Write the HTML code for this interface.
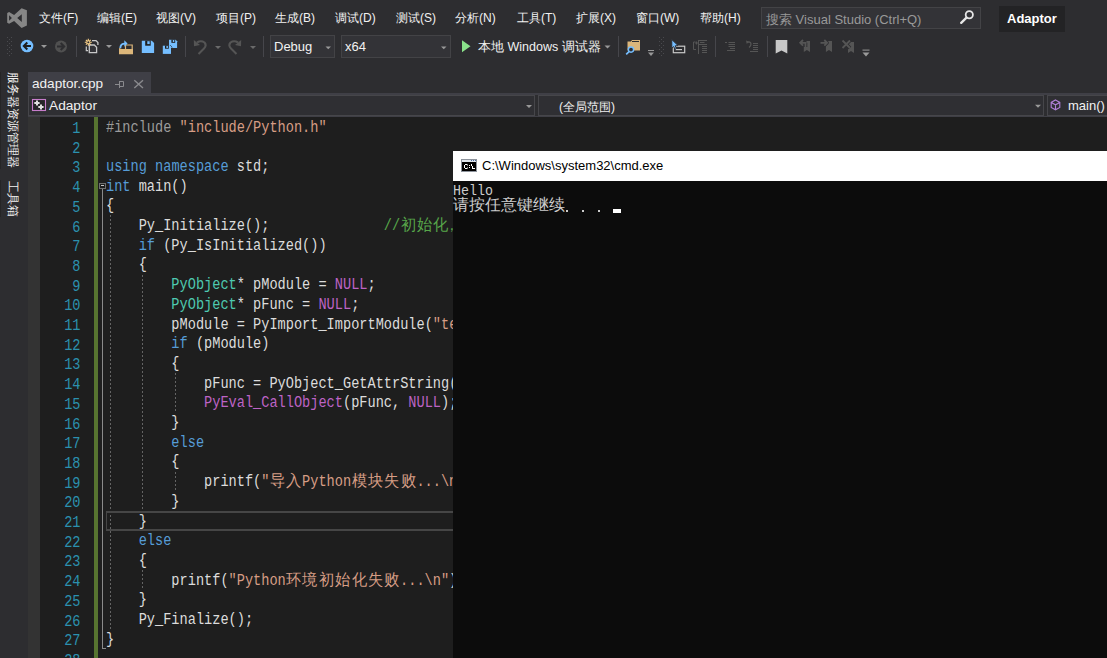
<!DOCTYPE html>
<html><head><meta charset="utf-8">
<style>
*{margin:0;padding:0;box-sizing:border-box}
html,body{width:1107px;height:658px;overflow:hidden;background:#2d2d30;font-family:"Liberation Sans",sans-serif;color:#f1f1f1}
.a{position:absolute}
.menu{font-size:12px;top:10px;color:#f1f1f1;white-space:nowrap}
.sep{position:absolute;width:1px;background:#3f3f46;top:36px;height:21px}
.dd{position:absolute;width:0;height:0;border-left:3px solid transparent;border-right:3px solid transparent;border-top:3px solid #999}
.ui{font-size:13px;white-space:nowrap}
/* editor */
#ed{position:absolute;left:28px;top:117px;width:1079px;height:541px;background:#1e1e1e;overflow:hidden}
.ln{position:absolute;left:0;width:52.5px;line-height:19.71px;text-align:right;font-family:"Liberation Mono",monospace;font-size:16px;color:#2b91af;transform:scaleX(0.851);transform-origin:right top}
.code{position:absolute;left:78.3px;line-height:19.71px;white-space:pre;font-family:"Liberation Mono",monospace;font-size:16px;color:#dcdcdc;transform:scaleX(0.851);transform-origin:left top}
.w{display:inline-block;width:19.2px;text-align:center;transform:scaleX(1.12)}
.g{position:absolute;width:1px;background:repeating-linear-gradient(to bottom,#646464 0 2px,transparent 2px 4px)}
.k{color:#569cd6}.s{color:#d69d85}.p{color:#9b9b9b}.t{color:#4ec9b0}.m{color:#bd63c5}.c{color:#57a64a}
</style></head><body>
<!-- menu bar -->
<svg class="a" style="left:0;top:0" width="32" height="32" viewBox="0 0 32 32"><path d="M7.2 12.9 L9.1 12 L14.1 14.9 L21.6 8.2 L26.9 10.3 V25.5 L21.6 27.9 L14.1 21 L9.1 23.8 L7.2 22.8 Z M9.1 15.3 V20.8 L11.9 18 Z M21.8 14.3 V22 L17.2 18 Z" fill="#868686" fill-rule="evenodd"/></svg>
<div class="a menu" style="left:39px">文件(F)</div>
<div class="a menu" style="left:97px">编辑(E)</div>
<div class="a menu" style="left:156px">视图(V)</div>
<div class="a menu" style="left:216px">项目(P)</div>
<div class="a menu" style="left:275px">生成(B)</div>
<div class="a menu" style="left:335px">调试(D)</div>
<div class="a menu" style="left:396px">测试(S)</div>
<div class="a menu" style="left:455px">分析(N)</div>
<div class="a menu" style="left:517px">工具(T)</div>
<div class="a menu" style="left:576px">扩展(X)</div>
<div class="a menu" style="left:636px">窗口(W)</div>
<div class="a menu" style="left:700px">帮助(H)</div>
<div class="a" style="left:761px;top:7px;width:220px;height:22px;background:#333337;border:1px solid #434346"></div>
<div class="a menu" style="left:766px;top:11px;color:#999999;font-size:13px">搜索 Visual Studio (Ctrl+Q)</div>
<div class="a" style="left:999px;top:6px;width:66px;height:26px;background:#232325"></div>
<div class="a ui" style="left:1007px;top:11px;font-weight:bold;color:#ffffff">Adaptor</div>

<svg class="a" style="left:0;top:0" width="1107" height="120" viewBox="0 0 1107 120">
<!-- combos toolbar -->
<rect x="270.5" y="35.5" width="64" height="22" fill="#333337" stroke="#434346"/>
<rect x="341.5" y="35.5" width="109" height="22" fill="#333337" stroke="#434346"/>
<g fill="#4a4a4e">
<rect x="7" y="37" width="1" height="1"/><rect x="7" y="41" width="1" height="1"/><rect x="7" y="45" width="1" height="1"/><rect x="7" y="49" width="1" height="1"/><rect x="7" y="53" width="1" height="1"/>
<rect x="11" y="37" width="1" height="1"/><rect x="11" y="41" width="1" height="1"/><rect x="11" y="45" width="1" height="1"/><rect x="11" y="49" width="1" height="1"/><rect x="11" y="53" width="1" height="1"/>
<rect x="9" y="39" width="1" height="1"/><rect x="9" y="43" width="1" height="1"/><rect x="9" y="47" width="1" height="1"/><rect x="9" y="51" width="1" height="1"/><rect x="9" y="55" width="1" height="1"/>
<rect x="659" y="37" width="1" height="1"/><rect x="659" y="41" width="1" height="1"/><rect x="659" y="45" width="1" height="1"/><rect x="659" y="49" width="1" height="1"/><rect x="659" y="53" width="1" height="1"/>
<rect x="663" y="37" width="1" height="1"/><rect x="663" y="41" width="1" height="1"/><rect x="663" y="45" width="1" height="1"/><rect x="663" y="49" width="1" height="1"/><rect x="663" y="53" width="1" height="1"/>
<rect x="661" y="39" width="1" height="1"/><rect x="661" y="43" width="1" height="1"/><rect x="661" y="47" width="1" height="1"/><rect x="661" y="51" width="1" height="1"/><rect x="661" y="55" width="1" height="1"/>
</g>
<g fill="#46464b">
<rect x="76" y="36" width="1" height="21"/><rect x="185" y="36" width="1" height="21"/><rect x="263" y="36" width="1" height="21"/>
<rect x="618" y="36" width="1" height="21"/><rect x="715" y="36" width="1" height="21"/><rect x="767" y="36" width="1" height="21"/>
</g>
<!-- back / forward -->
<circle cx="27" cy="46" r="6.3" fill="#75beff"/>
<path d="M24.5 46 H31 M27.3 42.5 L23.8 46 L27.3 49.5" stroke="#1e1e1e" stroke-width="2" fill="none"/>
<circle cx="61" cy="46.5" r="6" fill="#505050"/>
<path d="M57 46.5 H63.5 M60.7 43 L64.2 46.5 L60.7 50" stroke="#2d2d30" stroke-width="2" fill="none"/>
<!-- dropdown arrows -->
<g fill="#999999">
<path d="M41 45 H47 L44 48 Z"/><path d="M106 45 H112 L109 48 Z"/>
<path d="M325.5 46.5 H331 L328.25 49.2 Z"/><path d="M441 46.5 H446.5 L443.75 49.2 Z"/>
<path d="M604.5 45.5 H610.5 L607.5 48.5 Z"/>
</g>
<g fill="#6a6a6a"><path d="M215 46 H221 L218 49 Z"/><path d="M250 46 H256 L253 49 Z"/></g>
<!-- new project -->
<path d="M92 40.6 H96 L97.9 42.6 V45" stroke="#c8c8c8" stroke-width="1.3" fill="none"/>
<path d="M89.3 45 H94.3 L96.6 47.3 V52.6 H89.3 Z" fill="#333337" stroke="#c8c8c8" stroke-width="1.3"/>
<path d="M86.3 46.5 V50.6 H88" stroke="#c8c8c8" stroke-width="1.2" fill="none"/>
<g stroke="#ffd58a" stroke-width="1.1"><path d="M88.3 38.8 V45.8 M84.8 42.3 H91.8 M85.9 39.9 L90.7 44.7 M90.7 39.9 L85.9 44.7"/></g>
<circle cx="88.3" cy="42.3" r="1.4" fill="#2d2d30" stroke="#ffd58a" stroke-width="0.8"/>
<!-- open -->
<path d="M125.5 45 H132.2 V49.5 H125.5 Z" fill="none" stroke="#dcb67a" stroke-width="1.2"/>
<path d="M119 48 V54.3 H133 L133 49 H122 Z" fill="#dcb67a"/>
<path d="M120.3 48 Q120.5 43.6 125 43.6" stroke="#75beff" stroke-width="1.9" fill="none"/>
<path d="M124.3 40.2 L127.6 43.5 L124.3 46.8 Z" fill="#75beff"/>
<!-- save -->
<path d="M141.8 40.8 H151.8 L154.1 43.1 V53.1 H141.8 Z" fill="#75beff"/>
<rect x="145.2" y="40.6" width="5.5" height="5.1" fill="#1e1e1e"/>
<rect x="147.3" y="41.2" width="2.4" height="2.9" fill="#75beff"/>
<!-- save all -->
<path d="M169 39.8 H175.6 L177.1 41.3 V47.9 H169 Z" fill="#75beff"/>
<rect x="171.4" y="39.6" width="3.8" height="3.2" fill="#1e1e1e"/>
<rect x="172.8" y="40" width="1.5" height="2" fill="#75beff"/>
<path d="M170 45 L172 47.5" stroke="#1e1e1e" stroke-width="0.9"/>
<path d="M162.8 45.7 H171 V53.9 H162.8 Z" fill="#75beff"/>
<rect x="165" y="45.5" width="3.8" height="3.2" fill="#1e1e1e"/>
<rect x="166.4" y="46" width="1.5" height="2" fill="#75beff"/>
<!-- undo / redo -->
<g stroke="#555555" stroke-width="2.1" fill="none">
<path d="M197 42.5 Q201 40 204.5 42.5 Q207 45.5 204 48.5 L198.5 54"/>
<path d="M238 42.5 Q234 40 230.5 42.5 Q228 45.5 231 48.5 L236.5 54"/>
</g>
<path d="M193.8 40 L194 46.3 L200 45 Z" fill="#555555"/>
<path d="M241.2 40 L241 46.3 L235 45 Z" fill="#555555"/>
<!-- play -->
<path d="M462 40.2 L470.5 46.2 L462 52.2 Z" fill="#8ae28a"/>
<!-- find in files -->
<path d="M627.5 41.5 H631 L632 40 H640 V50.5 H627.5 Z" fill="#dcb67a"/>
<rect x="632" y="41" width="7" height="1" fill="#2d2d30"/>
<circle cx="631" cy="49.6" r="2.6" fill="#2d2d30" stroke="#75beff" stroke-width="1.4"/>
<path d="M629 51.6 L626.2 54.4" stroke="#75beff" stroke-width="1.6"/>
<!-- overflow -->
<g fill="#999999"><rect x="648" y="50" width="6" height="1"/><path d="M648 52.5 H654 L651 56 Z"/>
<rect x="862.5" y="49.6" width="7" height="1"/><path d="M862.5 52.5 H869.5 L866 56.4 Z"/></g>
<!-- select -->
<rect x="673.3" y="46.2" width="11.4" height="6.5" fill="none" stroke="#c8c8c8" stroke-width="1.2"/>
<rect x="675.5" y="49" width="6.5" height="1.2" fill="#c8c8c8"/>
<path d="M671.8 39.6 L678 45.6 L675.2 45.8 L676.4 48.6 L674.9 49.3 L673.7 46.5 L671.8 48.2 Z" fill="#75beff" stroke="#2d2d30" stroke-width="0.9"/>
<!-- grayed icons -->
<g stroke="#555555" stroke-width="1" fill="none">
<path d="M695.5 42 H693.5 V49.5 H696 M696.5 41.5 V44.5 M695 43 H698"/>
<path d="M698.5 40 V54 M699 40.5 H707 M700 42.5 H704.5 M699 44.5 H707 M702 46.5 H707 M702 48.5 H707 M702 50.5 H707 M702 52.5 H707"/>
<path d="M725 42.5 H727 M728.5 42.5 H735 M728.5 44.5 H735 M728.5 46.5 H735 M730 48.5 H735 M727 50.5 H735"/>
<path d="M753 43.5 H758 M753 45.5 H758 M753 47.5 H758 M753 49.5 H758 M750 51.5 H758"/>
<path d="M747 42.5 Q750.5 41 751 44 Q751 46 749 47.5" stroke-width="1.3"/>
</g>
<path d="M746 40.5 L748.8 41.5 L746.8 44 Z" fill="#555"/>
<!-- bookmarks -->
<path d="M775.7 40 H787.3 V53.5 L781.5 50.5 L775.7 53.5 Z" fill="#c8c8c8"/>
<path d="M803.8 41 H810 V52 L806.9 50 L803.8 52 Z" fill="#555555"/>
<path d="M825.9 41 H832 V52 L828.95 50 L825.9 52 Z" fill="#555555"/>
<path d="M848 42 H854 V53 L851 51 L848 53 Z" fill="#555555"/>
<g stroke="#2d2d30" stroke-width="3.6" fill="none" stroke-linejoin="round">
<path d="M800.5 42.8 H806.5 M803 40 L800.2 42.8 L803 45.6 M805.5 42.8 V47"/>
<path d="M820.5 42.8 H827 M824.3 40 L827.1 42.8 L824.3 45.6"/>
<path d="M842.5 40.5 L850 48 M850 40.5 L842.5 48"/>
</g>
<g stroke="#555555" stroke-width="1.8" fill="none">
<path d="M800.5 42.8 H806.5 M803 40 L800.2 42.8 L803 45.6 M805.5 42.8 V47"/>
<path d="M820.5 42.8 H827 M824.3 40 L827.1 42.8 L824.3 45.6"/>
<path d="M842.5 40.5 L850 48 M850 40.5 L842.5 48"/>
</g>
<!-- search icon -->
<circle cx="969.3" cy="14.8" r="3.6" fill="none" stroke="#e6e6e6" stroke-width="1.8"/>
<path d="M966.5 17.6 L961.2 22.9" stroke="#e6e6e6" stroke-width="2.3" stroke-linecap="round"/>
</svg>
<div class="a ui" style="left:274px;top:39px">Debug</div>
<div class="a ui" style="left:345px;top:39px">x64</div>
<div class="a ui" style="left:478px;top:39px;font-size:12.5px">本地 Windows 调试器</div>
<!-- tab strip -->
<div class="a" style="left:28px;top:72px;width:123px;height:21px;background:#3f3f46"></div>
<div class="a ui" style="left:32px;top:76px;color:#f1f1f1;font-size:13.6px">adaptor.cpp</div>
<svg class="a" style="left:110px;top:76px" width="40" height="16" viewBox="0 0 40 16">
<path d="M5 8.5 H9 M9.5 5 V12 M9.5 5.5 H13.5 V10.5 H9.5" stroke="#8a8a8e" stroke-width="1" fill="none"/>
<path d="M24.3 4.2 L33 12 M33 4.2 L24.3 12" stroke="#8a8a8e" stroke-width="1.4"/>
</svg>

<!-- nav bar -->
<div class="a" style="left:28px;top:93px;width:1079px;height:24px;background:#3f3f46"></div>
<div class="a" style="left:28px;top:95px;width:507px;height:21px;background:#2f2f33;border:1px solid #46464a"></div>
<div class="a" style="left:535px;top:95px;width:3px;height:21px;background:#2d2d30"></div>
<div class="a" style="left:538px;top:95px;width:506px;height:21px;background:#2f2f33;border:1px solid #46464a"></div>
<div class="a" style="left:1044px;top:95px;width:3px;height:21px;background:#2d2d30"></div>
<div class="a" style="left:1047px;top:95px;width:70px;height:21px;background:#2f2f33;border:1px solid #46464a"></div>
<svg class="a" style="left:0;top:90px" width="1107" height="30" viewBox="0 90 1107 30">
<rect x="32.5" y="99.5" width="13" height="11" fill="#252528" stroke="#c77dcb" stroke-width="1.1"/>
<path d="M36 100.5 H38 V102 H39.6 V104 H38 V105.5 H36 V104 H34.3 V102 H36 Z M40 104.5 H42 V106 H43.6 V108 H42 V109.6 H40 V108 H38.3 V106 H40 Z" fill="#e0e0e0"/>
<path d="M526 105 H532 L529 108 Z M1035 104.7 H1041 L1038 107.8 Z" fill="#999999"/>
<g stroke="#b180d7" stroke-width="1.1" fill="none">
<path d="M1055.5 100 L1059.8 102.4 V107.4 L1055.5 109.8 L1051.2 107.4 V102.4 Z M1051.2 102.4 L1055.5 104.8 L1059.8 102.4 M1055.5 104.8 V109.8"/>
</g>
</svg>
<div class="a ui" style="left:49px;top:98px;font-size:13.7px">Adaptor</div>
<div class="a ui" style="left:559px;top:99px;font-size:12px">(全局范围)</div>
<div class="a ui" style="left:1068px;top:98px;font-size:13px">main()</div>

<!-- left strip -->
<div class="a" style="left:0;top:72px;width:1px;height:97px;background:#252526"></div>
<div class="a" style="left:0;top:180px;width:1px;height:37px;background:#252526"></div>
<div class="a" style="left:19px;top:72px;width:96px;font-size:12px;line-height:12px;color:#f1f1f1;transform:rotate(90deg);transform-origin:0 0;white-space:nowrap">服务器资源管理器</div>
<div class="a" style="left:19px;top:181px;width:36px;font-size:12px;line-height:12px;color:#f1f1f1;transform:rotate(90deg);transform-origin:0 0;white-space:nowrap">工具箱</div>

<!-- editor -->
<div id="ed">
<div class="a" style="left:0;top:0;width:12px;height:541px;background:#333333"></div>
<pre class="ln" style="top:3px">1
2
3
4
5
6
7
8
9
10
11
12
13
14
15
16
17
18
19
20
21
22
23
24
25
26
27
28</pre>
<div class="a" style="left:66px;top:0;width:4px;height:541px;background:#577430"></div>
<div class="a" style="left:71px;top:66px;width:7px;height:6px;border:1px solid #6e6e6e"></div>
<div class="a" style="left:73px;top:68px;width:3px;height:1px;background:#c8c8c8"></div>
<div class="a" style="left:74px;top:72px;width:1px;height:459px;background:#8a8a8a"></div>
<div class="a" style="left:74px;top:531px;width:4px;height:1px;background:#8a8a8a"></div>
<div class="g" style="left:82px;top:98.4px;height:413.9px"></div>
<div class="g" style="left:114px;top:157.5px;height:236.5px"></div>
<div class="g" style="left:114px;top:453.1px;height:19.7px"></div>
<div class="g" style="left:147px;top:256.0px;height:39.4px"></div>
<div class="g" style="left:147px;top:354.6px;height:19.7px"></div>
<div class="a" style="left:78px;top:394px;width:1100px;height:20px;border-top:2px solid #464646;border-bottom:2px solid #464646;border-left:1px solid #464646"></div>
<pre class="code" style="top:1.5px"><span class="p">#include</span> <span class="s">"include/Python.h"</span>

<span class="k">using</span> <span class="k">namespace</span> std;
<span class="k">int</span> main()
{
    Py_Initialize();              <span class="c">//<span class="w">初</span><span class="w">始</span><span class="w">化</span><span class="w" style="text-align:left;transform:none;position:relative;left:-5px">，</span></span>
    <span class="k">if</span> (Py_IsInitialized())
    {
        <span class="t">PyObject</span>* pModule = <span class="m">NULL</span>;
        <span class="t">PyObject</span>* pFunc = <span class="m">NULL</span>;
        pModule = PyImport_ImportModule(<span class="s">"test"</span>);
        <span class="k">if</span> (pModule)
        {
            pFunc = PyObject_GetAttrString(pModule, <span class="s">"Hello"</span>);
            <span class="m">PyEval_CallObject</span>(pFunc, <span class="m">NULL</span>);
        }
        <span class="k">else</span>
        {
            printf(<span class="s">"<span class="w">导</span><span class="w">入</span>Python<span class="w">模</span><span class="w">块</span><span class="w">失</span><span class="w">败</span>...\n"</span>);
        }
    }
    <span class="k">else</span>
    {
        printf(<span class="s">"Python<span class="w">环</span><span class="w">境</span><span class="w">初</span><span class="w">始</span><span class="w">化</span><span class="w">失</span><span class="w">败</span>...\n"</span>);
    }
    Py_Finalize();
}
</pre>
</div>

<!-- cmd -->
<div class="a" style="left:453px;top:151px;width:654px;height:507px;background:#0c0c0c"></div>
<div class="a" style="left:453px;top:151px;width:654px;height:30px;background:#ffffff"></div>
<div class="a ui" style="left:482px;top:158px;color:#000;font-size:13px">C:\Windows\system32\cmd.exe</div>
<svg class="a" style="left:461px;top:159px" width="16" height="13" viewBox="0 0 16 13">
<rect x="0" y="0" width="16" height="13" fill="#8d939c"/>
<rect x="1" y="1" width="14" height="2" fill="#dfe5ec"/>
<rect x="10" y="1" width="1" height="1" fill="#4a6da0"/><rect x="12" y="1" width="1" height="1" fill="#4a6da0"/><rect x="14" y="1" width="1" height="1" fill="#4a6da0"/>
<rect x="1" y="3" width="14" height="9" fill="#000"/>
<g fill="#fff">
<rect x="3" y="6" width="1" height="3"/><rect x="4" y="5" width="2" height="1"/><rect x="4" y="9" width="2" height="1"/><rect x="6" y="5.5" width="1" height="1"/><rect x="6" y="8.5" width="1" height="1"/>
<rect x="8" y="6" width="1" height="1"/><rect x="8" y="8" width="1" height="1"/>
<rect x="10" y="5" width="1" height="2"/><rect x="11" y="7" width="1" height="3"/>
<rect x="12" y="9" width="2" height="1"/>
</g>
</svg>
<div class="a" style="left:453px;top:183.5px;font-family:'Liberation Mono',monospace;font-size:15px;line-height:16px;color:#cccccc;white-space:pre;transform:scaleX(0.889);transform-origin:0 0">Hello</div>
<div class="a" style="left:453px;top:196.5px;font-size:16px;line-height:16px;color:#cccccc;white-space:pre">请按任意键继续</div>
<div class="a" style="left:566px;top:210px;width:2px;height:2px;background:#cccccc"></div>
<div class="a" style="left:582px;top:210px;width:2px;height:2px;background:#cccccc"></div>
<div class="a" style="left:598px;top:210px;width:2px;height:2px;background:#cccccc"></div>
<div class="a" style="left:613px;top:209px;width:8px;height:4px;background:#ffffff"></div>
</body></html>
